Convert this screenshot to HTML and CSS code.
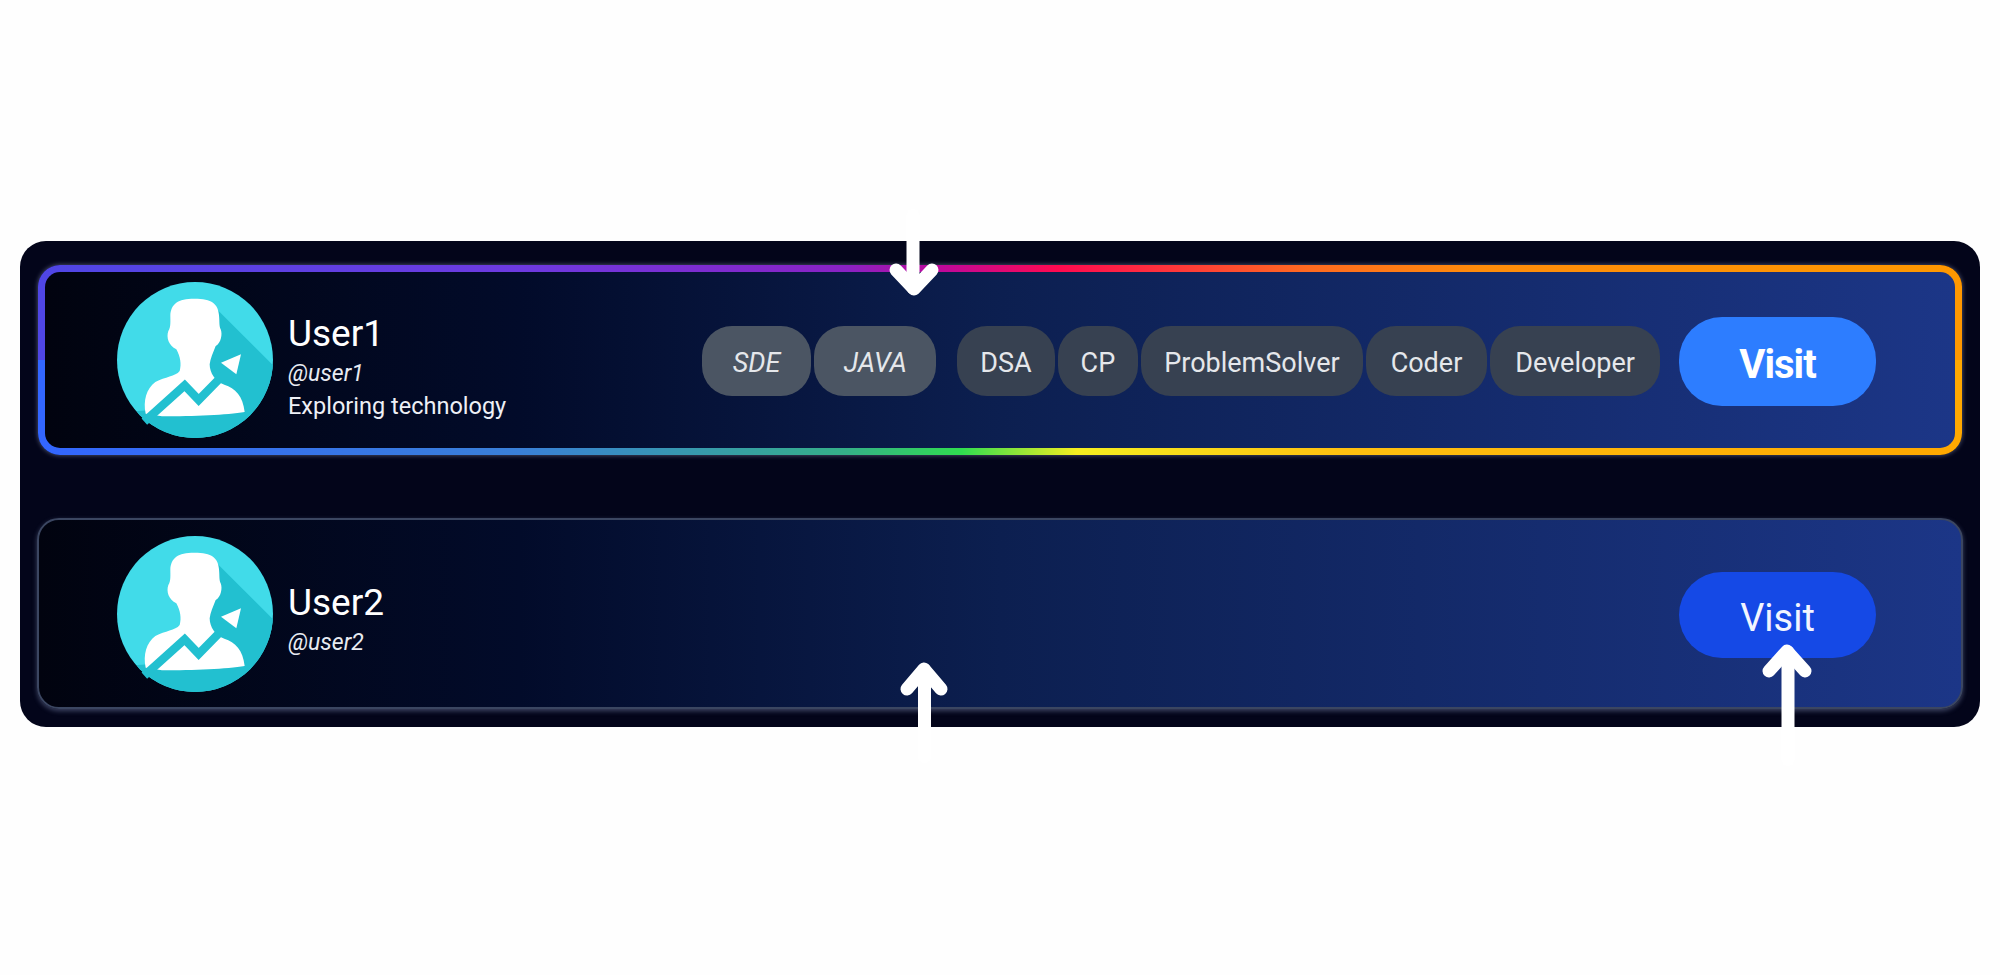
FILE: index.html
```html
<!DOCTYPE html>
<html lang="en">
<head>
<meta charset="utf-8">
<title>Users</title>
<link rel="stylesheet" href="styles.css">
</head>
<body>
<svg class="defs" width="0" height="0" aria-hidden="true">
  <defs>
    <clipPath id="disc"><circle cx="284" cy="272" r="234"/></clipPath>
    <symbol id="avatar" viewBox="50 38 468 468">
      <circle cx="284" cy="272" r="234" fill="#41dbe9"/>
      <g clip-path="url(#disc)">
        <path d="M352 122 L530 300 L530 520 L130 520 L110 425 L200 420 L300 200 Z" fill="#22c0d0"/>
      </g>
      <path d="M282 88 C335 88 354 104 356 138 C358 158 356 170 361 180 C367 194 362 222 346 230 C338 250 330 268 328 285 C328 310 345 338 372 346 C405 356 428 380 433 428 C380 437 280 441 185 441 L136 433 C128 395 138 358 165 338 C195 322 225 322 238 305 C244 285 240 262 228 240 C205 228 197 205 204 185 C212 175 210 155 210 138 C212 104 232 88 282 88 Z" fill="#fff"/>
      <path d="M132 457 L253 348 L295 392 L385 300" fill="none" stroke="#22c0d0" stroke-width="25"/>
      <path d="M350 278 L330 285 L338 305 L372 300 Z" fill="#22c0d0"/>
      <path d="M362 280 L422 255 L408 315 Z" fill="#fff"/>
    </symbol>
  </defs>
</svg>
<main class="panel">
  <section class="card card-active">
    <svg class="avatar"><use href="#avatar"/></svg>
    <div class="info info-first">
      <div class="name">User1</div>
      <div class="handle">@user1</div>
      <div class="bio">Exploring technology</div>
    </div>
    <div class="tags">
      <span class="tag tag-role tag-sde">SDE</span>
      <span class="tag tag-role">JAVA</span>
      <span class="tag tag-tight tag-skill">DSA</span>
      <span class="tag tag-tight">CP</span>
      <span class="tag tag-tight">ProblemSolver</span>
      <span class="tag">Coder</span>
      <span class="tag">Developer</span>
    </div>
    <a class="visit visit-hover">Visit</a>
  </section>
  <section class="card card-plain">
    <svg class="avatar"><use href="#avatar"/></svg>
    <div class="info">
      <div class="name">User2</div>
      <div class="handle">@user2</div>
    </div>
    <a class="visit">Visit</a>
  </section>
</main>
<svg class="arrows" viewBox="0 0 2000 975" aria-hidden="true">
  <g class="arrow">
    <path d="M913 215 V288"/>
    <path d="M896 270 L914 289 L932 270"/>
  </g>
  <g class="arrow">
    <path d="M924.5 757 V670"/>
    <path d="M907 689 L924 669 L941 689"/>
  </g>
  <g class="arrow">
    <path d="M1788 760 V652"/>
    <path d="M1769 671 L1787 651 L1805 671"/>
  </g>
</svg>
</body>
</html>
```
FILE: styles.css
```css
* { box-sizing: border-box; }
html, body { margin: 0; height: 100%; }
body {
  position: relative;
  background: #fefefe;
  color: #fff;
  font-family: Roboto, "Open Sans", sans-serif;
  overflow: hidden;
  padding-top: 241px;
}
.defs { position: absolute; }
.panel {
  width: 1960px;
  height: 486px;
  margin: 0 20px;
  padding: 24px 18px 18px;
  background: #03051a;
  border-radius: 26px;
  display: flex;
  flex-direction: column;
  gap: 63px;
}
.card {
  display: flex;
  align-items: center;
  border-radius: 22px;
}
.card-active {
  width: 1924px;
  height: 190px;
  padding: 0 79px 0 72px;
  border: 7px solid transparent;
  background:
    linear-gradient(to right, #01030f 0%, #020b2a 25%, #0c1f50 50%, #1c3687 100%) padding-box,
    linear-gradient(to right, #4f46e5 0%, #6d3ae0 25%, #8a22c4 42%, #c0089a 47%, #ff0a50 53%, #ff6a20 66%, #ff8c0a 75%, #ff9800 100%) top / 100% 50% no-repeat border-box,
    linear-gradient(to right, #3366ff 0%, #3a80d8 25%, #35b088 42%, #30dd50 48%, #f5ee20 54%, #ffc010 68%, #ffa800 100%) bottom / 100% 50% no-repeat border-box;
  box-shadow: 0 0 5px rgba(190, 200, 240, 0.45);
}
.card-plain {
  width: 1926px;
  height: 191px;
  margin-left: -1px;
  padding: 0 85px 0 78px;
  border: 2px solid #3b4661;
  background: linear-gradient(to right, #01030f 0%, #020b2a 25%, #0c1f50 50%, #1c3687 100%);
  box-shadow: 0 2px 5px rgba(150, 165, 210, 0.4);
}
.avatar {
  width: 156px;
  height: 156px;
  flex: none;
}
.info {
  margin-left: 15px;
  padding-top: 9px;
  flex: 1;
  min-width: 0;
}
.info-first { padding-top: 11px; }
.name {
  font-size: 37px;
  line-height: 48px;
}
.handle {
  margin-top: 1px;
  font-size: 23px;
  line-height: 30px;
  font-style: italic;
  color: #e8ebf2;
}
.bio {
  margin-top: 2px;
  font-size: 23.5px;
  line-height: 30px;
  color: #eef0f6;
}
.tags {
  display: flex;
  align-items: center;
  gap: 3px;
  margin: 2px 19px 0 0;
}
.tag {
  height: 70px;
  padding: 4px 25px 0;
  display: flex;
  align-items: center;
  border-radius: 30px;
  background: #374151;
  font-size: 27px;
  color: #e5e7eb;
}
.tag-tight { padding: 4px 23px 0; }
.tag-role {
  padding: 4px 29.5px 0;
  background: #4b5563;
  font-style: italic;
}
.tag-sde { padding: 4px 31px 0; }
.tag-skill { margin-left: 18px; }
.visit {
  width: 197px;
  height: 86px;
  margin-top: 2px;
  padding-top: 6px;
  display: flex;
  align-items: center;
  justify-content: center;
  border-radius: 43px;
  background: #1549e6;
  font-size: 38px;
  color: #f2f5ff;
}
.visit-hover {
  height: 89px;
  background: #2d7dff;
  font-weight: 700;
  font-size: 40px;
  letter-spacing: -1px;
  color: #fff;
}
.arrows {
  position: absolute;
  inset: 0;
  width: 2000px;
  height: 975px;
  pointer-events: none;
}
.arrow path {
  fill: none;
  stroke: #fff;
  stroke-width: 13;
  stroke-linecap: round;
  stroke-linejoin: round;
}
```
